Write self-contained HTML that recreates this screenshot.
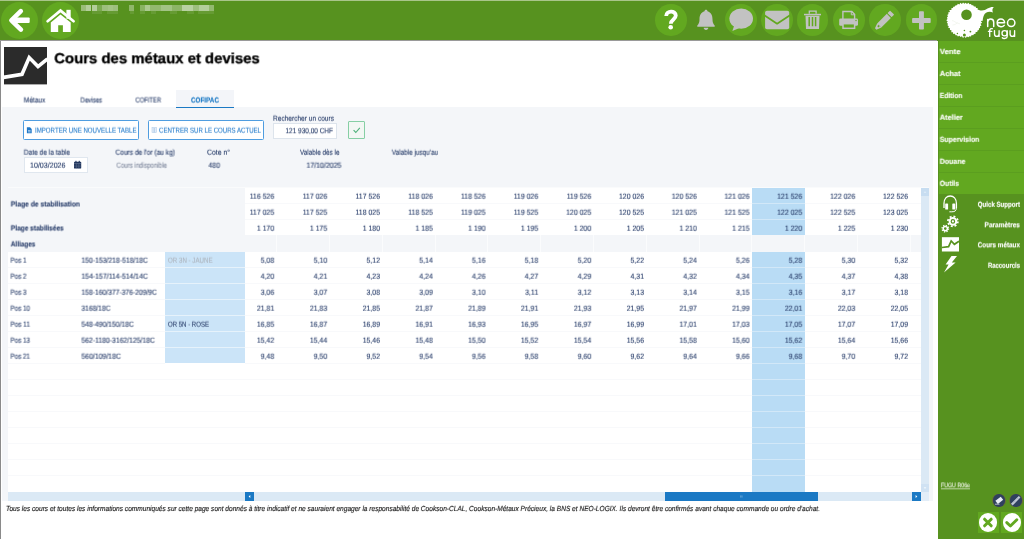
<!DOCTYPE html>
<html><head><meta charset="utf-8"><title>Cours des métaux et devises</title>
<style>
html,body{margin:0;padding:0;}
body{text-rendering:geometricPrecision;width:1024px;height:539px;overflow:hidden;background:#fff;font-family:"Liberation Sans",sans-serif;position:relative;}
div{box-sizing:border-box;}
svg{position:absolute;overflow:visible;}
.L{position:absolute;left:0;top:0;width:1024px;height:539px;will-change:transform;transform-origin:0 0;pointer-events:none;}
text{white-space:pre;}
</style></head><body>
<div style="position:absolute;left:0.00px;top:0.00px;width:1024.00px;height:41.00px;background:#57921f;"></div>
<div style="position:absolute;left:0.00px;top:0.00px;width:1024.00px;height:1.00px;background:#a9c58a;"></div>
<div style="position:absolute;left:0.00px;top:40.20px;width:937.30px;height:1.30px;background:#9a9a9a;"></div>
<div style="position:absolute;left:0.00px;top:41.00px;width:1.30px;height:498.00px;background:#8a8a8a;"></div>
<div style="position:absolute;left:937.50px;top:40.40px;width:86.50px;height:498.60px;background:#57921f;"></div>
<div style="position:absolute;left:1.15px;top:2.00px;width:37.00px;height:37.00px;border-radius:50%;background:#62a820"></div>
<div style="position:absolute;left:42.00px;top:2.00px;width:37.00px;height:37.00px;border-radius:50%;background:#62a820"></div>
<svg style="left:0;top:0" width="130" height="41"><path d="M20.8 11.2 L11.4 20.3 L20.9 29.600" fill="none" stroke="#fff" stroke-width="4.6" stroke-linecap="round" stroke-linejoin="round"/><rect x="11.500" y="17.600" width="18.200" height="5.400" rx="1" fill="#fff"/><path d="M47.600 21.200 L60.500 10.600 L73.600 21.200" fill="none" stroke="#fff" stroke-width="2.700" stroke-linecap="round" stroke-linejoin="miter"/><path d="M50.800 22.600 L60.500 14.500 L70.700 22.600 L70.700 31.900 L62.900 31.900 L62.900 25.200 L58.200 25.200 L58.200 31.900 L50.800 31.900 Z" fill="#fff"/><rect x="66.400" y="9.800" width="4.300" height="9" fill="#fff"/></svg>
<div style="position:absolute;left:0;top:0;width:300px;height:20px;filter:blur(0.45px)"><div style="position:absolute;left:80.70px;top:4.900px;width:5.40px;height:5.800px;background:rgba(255,255,255,0.4)"></div><div style="position:absolute;left:86.10px;top:4.900px;width:5.40px;height:5.800px;background:rgba(255,255,255,0.55)"></div><div style="position:absolute;left:91.50px;top:4.900px;width:5.40px;height:5.800px;background:rgba(255,255,255,0.55)"></div><div style="position:absolute;left:96.90px;top:4.900px;width:4.90px;height:5.800px;background:rgba(255,255,255,0.22)"></div><div style="position:absolute;left:101.80px;top:4.900px;width:5.80px;height:5.800px;background:rgba(255,255,255,0.42)"></div><div style="position:absolute;left:107.60px;top:4.900px;width:5.40px;height:5.800px;background:rgba(255,255,255,0.46)"></div><div style="position:absolute;left:113.00px;top:4.900px;width:5.40px;height:5.800px;background:rgba(255,255,255,0.42)"></div><div style="position:absolute;left:129.20px;top:4.900px;width:4.80px;height:5.800px;background:rgba(255,255,255,0.34)"></div><div style="position:absolute;left:140.00px;top:4.900px;width:5.20px;height:5.800px;background:rgba(255,255,255,0.3)"></div><div style="position:absolute;left:145.20px;top:4.900px;width:4.80px;height:5.800px;background:rgba(255,255,255,0.5)"></div><div style="position:absolute;left:150.00px;top:4.900px;width:10.80px;height:5.800px;background:rgba(255,255,255,0.36)"></div><div style="position:absolute;left:160.80px;top:4.900px;width:10.80px;height:5.800px;background:rgba(255,255,255,0.45)"></div><div style="position:absolute;left:171.60px;top:4.900px;width:10.70px;height:5.800px;background:rgba(255,255,255,0.32)"></div><div style="position:absolute;left:182.30px;top:4.900px;width:10.70px;height:5.800px;background:rgba(255,255,255,0.58)"></div><div style="position:absolute;left:193.00px;top:4.900px;width:5.90px;height:5.800px;background:rgba(255,255,255,0.42)"></div><div style="position:absolute;left:198.90px;top:4.900px;width:9.80px;height:5.800px;background:rgba(255,255,255,0.55)"></div><div style="position:absolute;left:208.70px;top:4.900px;width:5.30px;height:5.800px;background:rgba(255,255,255,0.36)"></div><div style="position:absolute;left:91.50px;top:11px;width:10.50px;height:3.400px;background:rgba(255,255,255,.09)"></div><div style="position:absolute;left:107.00px;top:11px;width:11.40px;height:3.400px;background:rgba(255,255,255,.09)"></div><div style="position:absolute;left:129.50px;top:11px;width:4.50px;height:3.400px;background:rgba(255,255,255,.09)"></div><div style="position:absolute;left:140.30px;top:11px;width:4.90px;height:3.400px;background:rgba(255,255,255,.09)"></div><div style="position:absolute;left:151.00px;top:11px;width:5.00px;height:3.400px;background:rgba(255,255,255,.09)"></div><div style="position:absolute;left:169.60px;top:11px;width:7.80px;height:3.400px;background:rgba(255,255,255,.09)"></div><div style="position:absolute;left:187.20px;top:11px;width:6.80px;height:3.400px;background:rgba(255,255,255,.09)"></div><div style="position:absolute;left:198.00px;top:11px;width:15.50px;height:3.400px;background:rgba(255,255,255,.09)"></div></div>
<div style="position:absolute;left:655.00px;top:4.10px;width:31.60px;height:31.60px;border-radius:50%;background:#62a820"></div>
<div style="position:absolute;left:725.30px;top:4.10px;width:31.60px;height:31.60px;border-radius:50%;background:#62a820"></div>
<div style="position:absolute;left:761.00px;top:4.10px;width:31.60px;height:31.60px;border-radius:50%;background:#62a820"></div>
<div style="position:absolute;left:796.90px;top:4.10px;width:31.60px;height:31.60px;border-radius:50%;background:#62a820"></div>
<div style="position:absolute;left:833.10px;top:4.10px;width:31.60px;height:31.60px;border-radius:50%;background:#62a820"></div>
<div style="position:absolute;left:869.00px;top:4.10px;width:31.60px;height:31.60px;border-radius:50%;background:#62a820"></div>
<div style="position:absolute;left:905.70px;top:4.10px;width:31.60px;height:31.60px;border-radius:50%;background:#62a820"></div>
<svg style="left:0;top:0" width="1024" height="41"><path d="M666.2 16 C666.2 10.400 675.800 10.200 675.800 15.600 C675.800 19.400 670.800 19.600 670.800 23.800" fill="none" stroke="#fff" stroke-width="3.800"/><circle cx="670.700" cy="27.300" r="2.300" fill="#fff"/></svg>
<svg style="left:0;top:0" width="1024" height="41"><path d="M706 9.700 c.9 0 1.500 .6 1.500 1.500 c3.600 1 5 4.200 5 8 c0 3 .6 4.600 2.200 6.200 l0 1.400 l-17.400 0 l0 -1.400 c1.600 -1.600 2.200 -3.200 2.200 -6.200 c0 -3.800 1.400 -7 5 -8 c0 -.9 .6 -1.500 1.500 -1.500 Z" fill="#c2c2c2"/><path d="M703.700 27.800 l4.600 0 c0 1.300 -1 2.200 -2.300 2.200 c-1.300 0 -2.300 -.9 -2.300 -2.200 Z" fill="#c2c2c2"/><ellipse cx="741.2" cy="18.600" rx="11.800" ry="10.200" fill="#c2c2c2"/><path d="M734.200 25.500 L732.400 30.900 L739.500 28 Z" fill="#c2c2c2"/><rect x="765.100" y="10.800" width="24.100" height="18.400" rx="1.800" fill="#c2c2c2"/><path d="M764.300 15.200 L777.100 23.700 L790 15.200" fill="none" stroke="#62a820" stroke-width="1.700" stroke-linejoin="round"/><rect x="804" y="13.800" width="17" height="1.500" fill="#c2c2c2"/><path d="M805.500 15.800 L819.500 15.800 L819 29 L806 29 Z" fill="#c2c2c2"/><path d="M809.300 13.800 L809.300 11.100 L816.100 11.100 L816.100 13.800" fill="none" stroke="#c2c2c2" stroke-width="1.300"/><path d="M809.200 17 L809.200 26.200 M812.500 17 L812.500 26.200 M815.600 17 L815.600 26.200" stroke="#62a820" stroke-width="1.500" fill="none"/><path d="M842.900 19 L842.900 11.500 L851.800 11.500 L854.600 14.400 L854.600 19" fill="none" stroke="#c2c2c2" stroke-width="1.400"/><path d="M851.300 11.500 L851.300 14.800 L854.600 14.800" fill="none" stroke="#c2c2c2" stroke-width="1"/><rect x="839.200" y="18.500" width="18.800" height="7.300" rx="1.400" fill="#c2c2c2"/><rect x="843" y="23.700" width="11.600" height="4.600" fill="#62a820" stroke="#c2c2c2" stroke-width="1.500"/><circle cx="856" cy="20.500" r=".7" fill="#62a820"/><g transform="translate(883.9,20.800) rotate(45)"><rect x="-2.900" y="-11.600" width="5.800" height="3.600" rx=".5" fill="#c2c2c2"/><rect x="-2.900" y="-7" width="5.800" height="13.600" fill="#c2c2c2"/><path d="M-2.900 6.500 L2.900 6.500 L1 11.600 L-1 11.600 Z" fill="#c2c2c2"/><circle cx="0" cy="7.600" r="1" fill="#62a820"/></g><rect x="912.100" y="18.100" width="18.600" height="4.900" rx=".8" fill="#c2c2c2"/><rect x="919" y="11.300" width="4.900" height="18.300" rx=".8" fill="#c2c2c2"/></svg>
<svg style="left:0;top:0" width="1024" height="41"><path d="M982.16 20.20 L980.94 21.42 L982.22 22.83 L980.53 23.81 L981.53 25.38 L979.96 26.19 L980.21 27.66 L978.95 28.43 L978.88 29.88 L977.50 30.44 L977.27 31.90 L975.66 32.09 L975.52 33.87 L973.97 33.96 L973.20 35.14 L971.62 34.89 L970.98 36.62 L969.43 36.18 L968.40 37.36 L966.89 36.42 L965.77 38.07 L964.40 36.40 L963.04 37.97 L961.91 36.36 L960.48 37.03 L959.52 35.72 L957.92 36.39 L957.03 35.20 L955.58 35.18 L954.91 33.84 L953.17 34.00 L953.03 32.21 L951.25 32.16 L951.47 30.30 L949.90 29.89 L950.00 28.35 L948.14 27.87 L948.80 26.20 L947.44 25.33 L947.97 23.87 L946.74 22.81 L947.77 21.42 L946.26 20.20 L947.53 18.96 L946.90 17.62 L947.98 16.53 L947.28 15.02 L948.55 14.10 L948.11 12.51 L949.96 12.03 L949.29 10.11 L951.44 10.07 L951.33 8.31 L952.87 8.02 L953.41 6.70 L954.94 6.60 L955.63 5.32 L957.07 5.28 L957.78 3.68 L959.44 4.43 L960.35 2.81 L961.91 4.03 L963.05 2.55 L964.40 3.68 L965.74 2.64 L966.90 3.95 L968.44 2.84 L969.43 4.22 L970.93 3.89 L971.73 5.28 L973.17 5.31 L973.93 6.50 L975.63 6.39 L976.03 7.92 L977.71 8.10 L977.43 10.01 L979.11 10.37 L979.04 11.92 L980.18 12.75 L980.02 14.19 L981.25 15.11 L980.55 16.59 L981.75 17.64 L981.31 18.96 Z" fill="#fff"/><path d="M976 8.500 C980 11.500 984.500 11 987.500 8.600 C989.500 7.200 991.800 6.800 993.800 7 C992.300 8.600 992 10.400 993 12.400 C990.500 11.400 988 11.600 986 12.800 C983.800 14.200 983 17 982.600 21 L975 18 Z" fill="#fff"/><circle cx="966.500" cy="14.800" r="5.300" fill="#57921f"/><circle cx="964.400" cy="34.900" r="1.500" fill="#57921f"/><circle cx="964.400" cy="30.500" r=".8" fill="#57921f"/><circle cx="970.400" cy="31.600" r=".9" fill="#57921f"/><circle cx="957.400" cy="33.500" r=".7" fill="#57921f"/><path d="M952 20.500 C954.500 20.800 956 23.500 960 23.800 M952.500 25 C955 25 956.500 23.500 957.500 22.500" fill="none" stroke="#dfe8d6" stroke-width=".35"/><g fill="none" stroke="#fff" stroke-width="1.500" stroke-linecap="round" stroke-linejoin="round"><path d="M987.700 26.600 L987.700 19.400 M987.700 22.300 C987.700 17.900 993.700 17.900 993.700 22.300 L993.700 26.600"/><path d="M997.400 22.700 L1004.600 22.700 C1004.600 17.800 997.200 17.800 997.200 22.800 C997.200 27.200 1002.400 27.600 1004.200 25.400"/><circle cx="1011.200" cy="22.800" r="3.700"/></g><g fill="none" stroke="#fff" stroke-width="1.350" stroke-linecap="round" stroke-linejoin="round"><path d="M989.700 36.400 L989.700 30.600 C989.700 28.700 991 28.400 992.300 28.700 M988.400 31.300 L991.800 31.300"/><path d="M994.500 30.700 L994.500 33.900 C994.500 37.100 999.100 37.100 999.100 33.900 L999.100 30.700 L999.100 36.400"/><circle cx="1004.600" cy="33.300" r="2.600"/><path d="M1007.200 30.700 L1007.200 36.200 C1007.200 38.800 1003.400 39 1002.300 37.700"/><path d="M1010.100 30.700 L1010.100 33.900 C1010.100 37.100 1014.600 37.100 1014.600 33.900 L1014.600 30.700 L1014.600 36.400"/></g></svg>
<div style="position:absolute;left:938.80px;top:40.50px;width:85.20px;height:21.93px;background:#62a820;"></div>
<div style="position:absolute;left:938.80px;top:62.43px;width:85.20px;height:21.93px;background:#62a820;"></div>
<div style="position:absolute;left:938.80px;top:61.93px;width:85.20px;height:1.00px;background:#5b9e1f;"></div>
<div style="position:absolute;left:938.80px;top:84.36px;width:85.20px;height:21.93px;background:#62a820;"></div>
<div style="position:absolute;left:938.80px;top:83.86px;width:85.20px;height:1.00px;background:#5b9e1f;"></div>
<div style="position:absolute;left:938.80px;top:106.29px;width:85.20px;height:21.93px;background:#62a820;"></div>
<div style="position:absolute;left:938.80px;top:105.79px;width:85.20px;height:1.00px;background:#5b9e1f;"></div>
<div style="position:absolute;left:938.80px;top:128.22px;width:85.20px;height:21.93px;background:#62a820;"></div>
<div style="position:absolute;left:938.80px;top:127.72px;width:85.20px;height:1.00px;background:#5b9e1f;"></div>
<div style="position:absolute;left:938.80px;top:150.15px;width:85.20px;height:21.93px;background:#62a820;"></div>
<div style="position:absolute;left:938.80px;top:149.65px;width:85.20px;height:1.00px;background:#5b9e1f;"></div>
<div style="position:absolute;left:938.80px;top:172.08px;width:85.20px;height:21.93px;background:#62a820;"></div>
<div style="position:absolute;left:938.80px;top:171.58px;width:85.20px;height:1.00px;background:#5b9e1f;"></div>
<svg style="left:0;top:0" width="1024" height="539"><path d="M944 208 L944 203.600 C944 198.600 946.800 196 950.200 196 C953.600 196 956.400 198.600 956.400 203.600 L956.400 208" fill="none" stroke="#fff" stroke-width="1.300"/><rect x="945.200" y="203.400" width="2.900" height="6.200" rx=".7" fill="#fff"/><rect x="952.300" y="203.400" width="2.900" height="6.200" rx=".7" fill="#fff"/><path d="M956.400 207.500 C956.400 210.800 955 211.800 951.800 211.800 L949.400 211.800" fill="none" stroke="#fff" stroke-width="1"/><circle cx="952.900" cy="221.400" r="3.300" fill="none" stroke="#fff" stroke-width="2"/><circle cx="952.900" cy="221.400" r="5" fill="none" stroke="#fff" stroke-width="1.700" stroke-dasharray="1.960 1.960"/><circle cx="952.900" cy="221.400" r="1.100" fill="#fff"/><circle cx="945.300" cy="228.600" r="2.100" fill="none" stroke="#fff" stroke-width="1.500"/><circle cx="945.300" cy="228.600" r="3.300" fill="none" stroke="#fff" stroke-width="1.200" stroke-dasharray="1.300 1.290"/><rect x="941.900" y="237.200" width="17.100" height="14.300" fill="#fff"/><path d="M941.900 247.500 L948.600 246.700 L951.200 241 L954.400 244.300 L959 241.300" fill="none" stroke="#57921f" stroke-width="1.700"/><path d="M951.500 256 L957 256 L951.800 262.600 L955.600 262.600 L944 272.500 L948.600 264.600 L945.600 264.600 Z" fill="#fff"/></svg>
<div style="position:absolute;left:992.30px;top:493.90px;width:13.60px;height:13.60px;border-radius:50%;background:#6b6a3a"></div>
<div style="position:absolute;left:992.80px;top:494.40px;width:12.60px;height:12.60px;border-radius:50%;background:#2f405e"></div>
<div style="position:absolute;left:1009.00px;top:493.90px;width:13.60px;height:13.60px;border-radius:50%;background:#6b6a3a"></div>
<div style="position:absolute;left:1009.50px;top:494.40px;width:12.60px;height:12.60px;border-radius:50%;background:#2f405e"></div>
<svg style="left:0;top:0" width="1024" height="539"><g transform="translate(999.3,500.3) rotate(-38)"><rect x="-3.400" y="-2" width="6.800" height="4" fill="#e8edf5"/></g><path d="M995 504.200 L999.500 504.200" stroke="#cfd6e2" stroke-width=".8"/><path d="M1011.800 504.600 L1019.600 496.800" stroke="#c9d0dc" stroke-width="2.200"/><path d="M1011.800 504.600 L1019.600 496.800" stroke="#5b6a86" stroke-width=".6" stroke-dasharray="1 1"/></svg>
<div style="position:absolute;left:977.60px;top:511.60px;width:21.50px;height:21.40px;background:#62a820;"></div>
<div style="position:absolute;left:1001.00px;top:511.60px;width:21.30px;height:21.40px;background:#62a820;"></div>
<div style="position:absolute;left:978.70px;top:513.30px;width:18.40px;height:18.40px;border-radius:50%;background:#fff"></div>
<div style="position:absolute;left:1002.70px;top:513.30px;width:18.40px;height:18.40px;border-radius:50%;background:#fff"></div>
<svg style="left:0;top:0" width="1024" height="539"><path d="M984.600 519.200 L991.200 525.800 M991.200 519.200 L984.600 525.800" stroke="#62a820" stroke-width="3" stroke-linecap="round" fill="none"/><path d="M1006.800 522.600 L1010.400 526 L1016.800 519.800" stroke="#62a820" stroke-width="2.900" stroke-linecap="round" stroke-linejoin="round" fill="none"/></svg>
<svg style="left:4px;top:47.3px" width="43" height="37.4" viewBox="0 0 43 37.4"><rect width="43" height="37.400" fill="#2b2b2b"/><path d="M-0.500 30.400 L18 27.300 L25.200 10.600 L34 19.600 L43.500 11.800" fill="none" stroke="#fff" stroke-width="3.600" stroke-linejoin="miter"/></svg>
<div style="position:absolute;left:175.80px;top:89.80px;width:58.00px;height:17.80px;background:#f3f5f9;"></div>
<div style="position:absolute;left:2.00px;top:107.40px;width:931.10px;height:394.00px;background:#f4f6f9;"></div>
<div style="position:absolute;left:175.80px;top:106.60px;width:58.00px;height:1.50px;background:#1b79c4;"></div>
<div style="position:absolute;left:23.00px;top:120.00px;width:116.00px;height:20.00px;background:#fff;border:1px solid #4f9de0;border-radius:1.500px;"></div>
<div style="position:absolute;left:148.00px;top:120.00px;width:115.60px;height:20.00px;background:#fff;border:1px solid #4f9de0;border-radius:1.500px;"></div>
<svg style="left:0;top:0" width="400" height="180"><path d="M26.900 127.300 L30 127.300 L31.700 129 L31.700 133.300 L26.900 133.300 Z" fill="#1f78c8"/><path d="M28 130.600 L30.600 130.600 M28 131.900 L30.600 131.900" stroke="#fff" stroke-width=".6"/><rect x="152" y="127.600" width="4.400" height="4.900" fill="#e3edf8" stroke="#b3cde9" stroke-width=".6"/><path d="M154.200 128 L154.200 132.300" stroke="#9dbfe3" stroke-width=".8"/></svg>
<div style="position:absolute;left:273.00px;top:123.00px;width:64.00px;height:15.60px;background:#fff;border:1px solid #dde4ec;"></div>
<div style="position:absolute;left:347.70px;top:121.40px;width:17.80px;height:17.50px;background:#f2f7f4;border:1px solid #86cfa5;border-radius:1px;"></div>
<svg style="left:0;top:0" width="400" height="180"><path d="M353.600 130.200 L355.800 132.500 L359.800 127.900" fill="none" stroke="#4db07a" stroke-width="1.100"/></svg>
<div style="position:absolute;left:23.50px;top:157.00px;width:64.00px;height:15.60px;background:#fff;border:1px solid #e0e7ef;"></div>
<svg style="left:0;top:0" width="400" height="180"><rect x="74" y="161.800" width="7.200" height="6.800" rx=".7" fill="#22365e"/><rect x="75.400" y="160.800" width="1.100" height="2" fill="#22365e"/><rect x="78.700" y="160.800" width="1.100" height="2" fill="#22365e"/><path d="M74 163.600 L81.200 163.600" stroke="#8090aa" stroke-width=".5"/><path d="M76.400 164 L76.400 168.600 M78.800 164 L78.800 168.600 M74 166.100 L81.200 166.100" stroke="#6d7d99" stroke-width=".4"/></svg>
<div style="position:absolute;left:7.70px;top:186.90px;width:921.50px;height:1.00px;background:#fafbfc;"></div>
<div style="position:absolute;left:7.70px;top:188.00px;width:913.10px;height:303.80px;background:#fff;"></div>
<div style="position:absolute;left:7.70px;top:203.00px;width:913.10px;height:1.00px;background:#f8f9fb;"></div>
<div style="position:absolute;left:7.70px;top:219.00px;width:913.10px;height:1.00px;background:#f8f9fb;"></div>
<div style="position:absolute;left:7.70px;top:235.00px;width:913.10px;height:1.00px;background:#f8f9fb;"></div>
<div style="position:absolute;left:7.70px;top:251.00px;width:913.10px;height:1.00px;background:#f8f9fb;"></div>
<div style="position:absolute;left:7.70px;top:267.00px;width:913.10px;height:1.00px;background:#f8f9fb;"></div>
<div style="position:absolute;left:7.70px;top:283.00px;width:913.10px;height:1.00px;background:#f8f9fb;"></div>
<div style="position:absolute;left:7.70px;top:299.00px;width:913.10px;height:1.00px;background:#f8f9fb;"></div>
<div style="position:absolute;left:7.70px;top:315.00px;width:913.10px;height:1.00px;background:#f8f9fb;"></div>
<div style="position:absolute;left:7.70px;top:331.00px;width:913.10px;height:1.00px;background:#f8f9fb;"></div>
<div style="position:absolute;left:7.70px;top:347.00px;width:913.10px;height:1.00px;background:#f8f9fb;"></div>
<div style="position:absolute;left:7.70px;top:363.00px;width:913.10px;height:1.00px;background:#f8f9fb;"></div>
<div style="position:absolute;left:7.70px;top:379.00px;width:913.10px;height:1.00px;background:#f8f9fb;"></div>
<div style="position:absolute;left:7.70px;top:395.00px;width:913.10px;height:1.00px;background:#f8f9fb;"></div>
<div style="position:absolute;left:7.70px;top:411.00px;width:913.10px;height:1.00px;background:#f8f9fb;"></div>
<div style="position:absolute;left:7.70px;top:427.00px;width:913.10px;height:1.00px;background:#f8f9fb;"></div>
<div style="position:absolute;left:7.70px;top:443.00px;width:913.10px;height:1.00px;background:#f8f9fb;"></div>
<div style="position:absolute;left:7.70px;top:459.00px;width:913.10px;height:1.00px;background:#f8f9fb;"></div>
<div style="position:absolute;left:7.70px;top:475.00px;width:913.10px;height:1.00px;background:#f8f9fb;"></div>
<div style="position:absolute;left:7.70px;top:188.00px;width:237.30px;height:64.00px;background:#f4f6f9;"></div>
<div style="position:absolute;left:752.20px;top:188.00px;width:52.60px;height:303.80px;background:#b9dcf5;"></div>
<div style="position:absolute;left:752.20px;top:203.00px;width:52.60px;height:1.00px;background:#d2e8f8;"></div>
<div style="position:absolute;left:752.20px;top:219.00px;width:52.60px;height:1.00px;background:#d2e8f8;"></div>
<div style="position:absolute;left:752.20px;top:235.00px;width:52.60px;height:1.00px;background:#d2e8f8;"></div>
<div style="position:absolute;left:752.20px;top:251.00px;width:52.60px;height:1.00px;background:#d2e8f8;"></div>
<div style="position:absolute;left:752.20px;top:267.00px;width:52.60px;height:1.00px;background:#d2e8f8;"></div>
<div style="position:absolute;left:752.20px;top:283.00px;width:52.60px;height:1.00px;background:#d2e8f8;"></div>
<div style="position:absolute;left:752.20px;top:299.00px;width:52.60px;height:1.00px;background:#d2e8f8;"></div>
<div style="position:absolute;left:752.20px;top:315.00px;width:52.60px;height:1.00px;background:#d2e8f8;"></div>
<div style="position:absolute;left:752.20px;top:331.00px;width:52.60px;height:1.00px;background:#d2e8f8;"></div>
<div style="position:absolute;left:752.20px;top:347.00px;width:52.60px;height:1.00px;background:#d2e8f8;"></div>
<div style="position:absolute;left:752.20px;top:363.00px;width:52.60px;height:1.00px;background:#d2e8f8;"></div>
<div style="position:absolute;left:752.20px;top:379.00px;width:52.60px;height:1.00px;background:#d2e8f8;"></div>
<div style="position:absolute;left:752.20px;top:395.00px;width:52.60px;height:1.00px;background:#d2e8f8;"></div>
<div style="position:absolute;left:752.20px;top:411.00px;width:52.60px;height:1.00px;background:#d2e8f8;"></div>
<div style="position:absolute;left:752.20px;top:427.00px;width:52.60px;height:1.00px;background:#d2e8f8;"></div>
<div style="position:absolute;left:752.20px;top:443.00px;width:52.60px;height:1.00px;background:#d2e8f8;"></div>
<div style="position:absolute;left:752.20px;top:459.00px;width:52.60px;height:1.00px;background:#d2e8f8;"></div>
<div style="position:absolute;left:752.20px;top:475.00px;width:52.60px;height:1.00px;background:#d2e8f8;"></div>
<div style="position:absolute;left:245.00px;top:235.30px;width:675.80px;height:16.40px;background:#f4f6f9;"></div>
<div style="position:absolute;left:276.15px;top:235.30px;width:0.90px;height:16.40px;background:#fbfcfd;"></div>
<div style="position:absolute;left:328.95px;top:235.30px;width:0.90px;height:16.40px;background:#fbfcfd;"></div>
<div style="position:absolute;left:381.75px;top:235.30px;width:0.90px;height:16.40px;background:#fbfcfd;"></div>
<div style="position:absolute;left:434.55px;top:235.30px;width:0.90px;height:16.40px;background:#fbfcfd;"></div>
<div style="position:absolute;left:487.35px;top:235.30px;width:0.90px;height:16.40px;background:#fbfcfd;"></div>
<div style="position:absolute;left:540.15px;top:235.30px;width:0.90px;height:16.40px;background:#fbfcfd;"></div>
<div style="position:absolute;left:592.95px;top:235.30px;width:0.90px;height:16.40px;background:#fbfcfd;"></div>
<div style="position:absolute;left:645.75px;top:235.30px;width:0.90px;height:16.40px;background:#fbfcfd;"></div>
<div style="position:absolute;left:698.55px;top:235.30px;width:0.90px;height:16.40px;background:#fbfcfd;"></div>
<div style="position:absolute;left:751.35px;top:235.30px;width:0.90px;height:16.40px;background:#fbfcfd;"></div>
<div style="position:absolute;left:804.15px;top:235.30px;width:0.90px;height:16.40px;background:#fbfcfd;"></div>
<div style="position:absolute;left:856.95px;top:235.30px;width:0.90px;height:16.40px;background:#fbfcfd;"></div>
<div style="position:absolute;left:909.75px;top:235.30px;width:0.90px;height:16.40px;background:#fbfcfd;"></div>
<div style="position:absolute;left:165.20px;top:252.00px;width:79.80px;height:112.00px;background:#cbe4f8;"></div>
<div style="position:absolute;left:165.20px;top:267.00px;width:79.80px;height:1.00px;background:#e6f2fb;"></div>
<div style="position:absolute;left:165.20px;top:283.00px;width:79.80px;height:1.00px;background:#e6f2fb;"></div>
<div style="position:absolute;left:165.20px;top:299.00px;width:79.80px;height:1.00px;background:#e6f2fb;"></div>
<div style="position:absolute;left:165.20px;top:315.00px;width:79.80px;height:1.00px;background:#e6f2fb;"></div>
<div style="position:absolute;left:165.20px;top:331.00px;width:79.80px;height:1.00px;background:#e6f2fb;"></div>
<div style="position:absolute;left:165.20px;top:347.00px;width:79.80px;height:1.00px;background:#e6f2fb;"></div>
<div style="position:absolute;left:165.20px;top:363.00px;width:79.80px;height:1.00px;background:#fff;"></div>
<div style="position:absolute;left:920.60px;top:188.00px;width:8.60px;height:303.80px;background:#dbe9f5;"></div>
<div style="position:absolute;left:920.60px;top:188.00px;width:8.60px;height:8.00px;background:#c7ddf1;"></div>
<div style="position:absolute;left:920.60px;top:484.10px;width:8.60px;height:7.70px;background:#d0e2f3;"></div>
<div style="position:absolute;left:7.70px;top:491.50px;width:921.50px;height:9.40px;background:#dbe9f5;"></div>
<div style="position:absolute;left:920.60px;top:491.80px;width:8.60px;height:9.10px;background:#e2edf8;"></div>
<div style="position:absolute;left:245.00px;top:491.90px;width:9.00px;height:9.00px;background:#1b79c4;"></div>
<div style="position:absolute;left:911.90px;top:491.90px;width:8.80px;height:9.00px;background:#1b79c4;"></div>
<div style="position:absolute;left:665.00px;top:491.90px;width:153.00px;height:9.00px;background:#1b79c4;"></div>
<svg style="left:0;top:0" width="1024" height="539"><path d="M923.700 487.300 L926.300 487.300 L925 488.900 Z" fill="#f4f9fd"/><path d="M923.700 192.800 L926.300 192.800 L925 191.200 Z" fill="#e3effa"/><path d="M250.300 494.900 L250.300 498.100 L248.600 496.500 Z M915.600 494.900 L915.600 498.100 L917.300 496.500 Z" fill="#fff"/><path d="M740.700 495.400 L740.700 497.600 M742 495.400 L742 497.600" stroke="#9fc8ea" stroke-width=".5"/></svg>
<svg class="L" width="1024" height="539" style="transform:translate3d(0.0px,0.0px,0) rotate(0.005deg)"><text x="6" y="511" font-size="7.4" fill="#111" stroke="#111" stroke-width="0.12" font-style="italic" textLength="814.00" lengthAdjust="spacingAndGlyphs">Tous les cours et toutes les informations communiqués sur cette page sont donnés à titre indicatif et ne sauraient engager la responsabilité de Cookson-CLAL, Cookson-Métaux Précieux, la BNS et NEO-LOGIX. Ils devront être confirmés avant chaque commande ou ordre d'achat.</text></svg>
<svg class="L" width="1024" height="539" style="transform:translate3d(0.0px,0.25px,0) rotate(0.005deg)"><text x="1020" y="227" font-size="7.4" fill="#fff" stroke="#fff" stroke-width="0.12" font-weight="bold" text-anchor="end" textLength="35.40" lengthAdjust="spacingAndGlyphs">Paramètres</text><text x="1020" y="247" font-size="7.4" fill="#fff" stroke="#fff" stroke-width="0.12" font-weight="bold" text-anchor="end" textLength="42.20" lengthAdjust="spacingAndGlyphs">Cours métaux</text><text x="941" y="487" font-size="6.4" fill="#e9f1df" stroke="#e9f1df" stroke-width="0.12" textLength="29.00" lengthAdjust="spacingAndGlyphs" text-decoration="underline">FUGU R06e</text><text x="333" y="133" font-size="7.6" fill="#283d6a" stroke="#283d6a" stroke-width="0.12" text-anchor="end" textLength="47.50" lengthAdjust="spacingAndGlyphs">121 930,00 CHF</text></svg>
<svg class="L" width="1024" height="539" style="transform:translate3d(0.0px,0.5px,0) rotate(0.005deg)"><text x="191" y="102" font-size="7.4" fill="#1b79c4" stroke="#1b79c4" stroke-width="0.12" font-weight="bold" textLength="28.00" lengthAdjust="spacingAndGlyphs">COFIPAC</text></svg>
<svg class="L" width="1024" height="539" style="transform:translate3d(0.0px,0.75px,0) rotate(0.005deg)"><text x="1020" y="206" font-size="7.4" fill="#fff" stroke="#fff" stroke-width="0.12" font-weight="bold" text-anchor="end" textLength="42.20" lengthAdjust="spacingAndGlyphs">Quick Support</text><text x="1020" y="267" font-size="7.4" fill="#fff" stroke="#fff" stroke-width="0.12" font-weight="bold" text-anchor="end" textLength="32.10" lengthAdjust="spacingAndGlyphs">Raccourcis</text><text x="35" y="132" font-size="7.6" fill="#2a7fcc" stroke="#2a7fcc" stroke-width="0.12" textLength="101.50" lengthAdjust="spacingAndGlyphs">IMPORTER UNE NOUVELLE TABLE</text><text x="159" y="132" font-size="7.6" fill="#2a7fcc" stroke="#2a7fcc" stroke-width="0.12" textLength="102.00" lengthAdjust="spacingAndGlyphs">CENTRER SUR LE COURS ACTUEL</text><text x="273" y="120" font-size="7.6" fill="#283d6a" stroke="#283d6a" stroke-width="0.12" textLength="61.00" lengthAdjust="spacingAndGlyphs">Rechercher un cours</text><text x="30" y="167" font-size="7.6" fill="#283d6a" stroke="#283d6a" stroke-width="0.12" textLength="35.50" lengthAdjust="spacingAndGlyphs">10/03/2026</text><text x="207" y="154" font-size="7.6" fill="#283d6a" stroke="#283d6a" stroke-width="0.12" textLength="23.00" lengthAdjust="spacingAndGlyphs">Cote n°</text><text x="300" y="154" font-size="7.6" fill="#283d6a" stroke="#283d6a" stroke-width="0.12" textLength="39.50" lengthAdjust="spacingAndGlyphs">Valable dès le</text><text x="168" y="262" font-size="7.6" fill="#adb5bf" stroke="#adb5bf" stroke-width="0.12" textLength="44.50" lengthAdjust="spacingAndGlyphs">OR 3N - JAUNE</text><text x="168" y="326" font-size="7.6" fill="#283d6a" stroke="#283d6a" stroke-width="0.12" textLength="41.00" lengthAdjust="spacingAndGlyphs">OR 5N - ROSE</text><text x="380" y="198" font-size="7.6" fill="#283d6a" stroke="#283d6a" stroke-width="0.12" text-anchor="end" textLength="24.53" lengthAdjust="spacingAndGlyphs">117 526</text><text x="380" y="214" font-size="7.6" fill="#283d6a" stroke="#283d6a" stroke-width="0.12" text-anchor="end" textLength="24.53" lengthAdjust="spacingAndGlyphs">118 025</text><text x="380" y="230" font-size="7.6" fill="#283d6a" stroke="#283d6a" stroke-width="0.12" text-anchor="end" textLength="17.34" lengthAdjust="spacingAndGlyphs">1 180</text><text x="380" y="262" font-size="7.6" fill="#283d6a" stroke="#283d6a" stroke-width="0.12" text-anchor="end" textLength="13.49" lengthAdjust="spacingAndGlyphs">5,12</text><text x="380" y="278" font-size="7.6" fill="#283d6a" stroke="#283d6a" stroke-width="0.12" text-anchor="end" textLength="13.49" lengthAdjust="spacingAndGlyphs">4,23</text><text x="380" y="294" font-size="7.6" fill="#283d6a" stroke="#283d6a" stroke-width="0.12" text-anchor="end" textLength="13.49" lengthAdjust="spacingAndGlyphs">3,08</text><text x="380" y="310" font-size="7.6" fill="#283d6a" stroke="#283d6a" stroke-width="0.12" text-anchor="end" textLength="17.34" lengthAdjust="spacingAndGlyphs">21,85</text><text x="380" y="326" font-size="7.6" fill="#283d6a" stroke="#283d6a" stroke-width="0.12" text-anchor="end" textLength="17.34" lengthAdjust="spacingAndGlyphs">16,89</text><text x="380" y="342" font-size="7.6" fill="#283d6a" stroke="#283d6a" stroke-width="0.12" text-anchor="end" textLength="17.34" lengthAdjust="spacingAndGlyphs">15,46</text><text x="380" y="358" font-size="7.6" fill="#283d6a" stroke="#283d6a" stroke-width="0.12" text-anchor="end" textLength="13.49" lengthAdjust="spacingAndGlyphs">9,52</text><text x="644" y="198" font-size="7.6" fill="#283d6a" stroke="#283d6a" stroke-width="0.12" text-anchor="end" textLength="25.05" lengthAdjust="spacingAndGlyphs">120 026</text><text x="644" y="214" font-size="7.6" fill="#283d6a" stroke="#283d6a" stroke-width="0.12" text-anchor="end" textLength="25.05" lengthAdjust="spacingAndGlyphs">120 525</text><text x="644" y="230" font-size="7.6" fill="#283d6a" stroke="#283d6a" stroke-width="0.12" text-anchor="end" textLength="17.34" lengthAdjust="spacingAndGlyphs">1 205</text><text x="644" y="262" font-size="7.6" fill="#283d6a" stroke="#283d6a" stroke-width="0.12" text-anchor="end" textLength="13.49" lengthAdjust="spacingAndGlyphs">5,22</text><text x="644" y="278" font-size="7.6" fill="#283d6a" stroke="#283d6a" stroke-width="0.12" text-anchor="end" textLength="13.49" lengthAdjust="spacingAndGlyphs">4,31</text><text x="644" y="294" font-size="7.6" fill="#283d6a" stroke="#283d6a" stroke-width="0.12" text-anchor="end" textLength="13.49" lengthAdjust="spacingAndGlyphs">3,13</text><text x="644" y="310" font-size="7.6" fill="#283d6a" stroke="#283d6a" stroke-width="0.12" text-anchor="end" textLength="17.34" lengthAdjust="spacingAndGlyphs">21,95</text><text x="644" y="326" font-size="7.6" fill="#283d6a" stroke="#283d6a" stroke-width="0.12" text-anchor="end" textLength="17.34" lengthAdjust="spacingAndGlyphs">16,99</text><text x="644" y="342" font-size="7.6" fill="#283d6a" stroke="#283d6a" stroke-width="0.12" text-anchor="end" textLength="17.34" lengthAdjust="spacingAndGlyphs">15,56</text><text x="644" y="358" font-size="7.6" fill="#283d6a" stroke="#283d6a" stroke-width="0.12" text-anchor="end" textLength="13.49" lengthAdjust="spacingAndGlyphs">9,62</text><text x="908" y="198" font-size="7.6" fill="#283d6a" stroke="#283d6a" stroke-width="0.12" text-anchor="end" textLength="25.05" lengthAdjust="spacingAndGlyphs">122 526</text><text x="908" y="214" font-size="7.6" fill="#283d6a" stroke="#283d6a" stroke-width="0.12" text-anchor="end" textLength="25.05" lengthAdjust="spacingAndGlyphs">123 025</text><text x="908" y="230" font-size="7.6" fill="#283d6a" stroke="#283d6a" stroke-width="0.12" text-anchor="end" textLength="17.34" lengthAdjust="spacingAndGlyphs">1 230</text><text x="908" y="262" font-size="7.6" fill="#283d6a" stroke="#283d6a" stroke-width="0.12" text-anchor="end" textLength="13.49" lengthAdjust="spacingAndGlyphs">5,32</text><text x="908" y="278" font-size="7.6" fill="#283d6a" stroke="#283d6a" stroke-width="0.12" text-anchor="end" textLength="13.49" lengthAdjust="spacingAndGlyphs">4,38</text><text x="908" y="294" font-size="7.6" fill="#283d6a" stroke="#283d6a" stroke-width="0.12" text-anchor="end" textLength="13.49" lengthAdjust="spacingAndGlyphs">3,18</text><text x="908" y="310" font-size="7.6" fill="#283d6a" stroke="#283d6a" stroke-width="0.12" text-anchor="end" textLength="17.34" lengthAdjust="spacingAndGlyphs">22,05</text><text x="908" y="326" font-size="7.6" fill="#283d6a" stroke="#283d6a" stroke-width="0.12" text-anchor="end" textLength="17.34" lengthAdjust="spacingAndGlyphs">17,09</text><text x="908" y="342" font-size="7.6" fill="#283d6a" stroke="#283d6a" stroke-width="0.12" text-anchor="end" textLength="17.34" lengthAdjust="spacingAndGlyphs">15,66</text><text x="908" y="358" font-size="7.6" fill="#283d6a" stroke="#283d6a" stroke-width="0.12" text-anchor="end" textLength="13.49" lengthAdjust="spacingAndGlyphs">9,72</text></svg>
<svg class="L" width="1024" height="539" style="transform:translate3d(0.25px,0.25px,0) rotate(0.005deg)"><text x="54" y="63" font-size="14.6" fill="#000" stroke="#000" stroke-width="0.35" font-weight="bold" textLength="205.60" lengthAdjust="spacingAndGlyphs">Cours des métaux et devises</text></svg>
<svg class="L" width="1024" height="539" style="transform:translate3d(0.25px,0.75px,0) rotate(0.005deg)"><text x="274" y="198" font-size="7.6" fill="#283d6a" stroke="#283d6a" stroke-width="0.12" text-anchor="end" textLength="24.53" lengthAdjust="spacingAndGlyphs">116 526</text><text x="274" y="214" font-size="7.6" fill="#283d6a" stroke="#283d6a" stroke-width="0.12" text-anchor="end" textLength="24.53" lengthAdjust="spacingAndGlyphs">117 025</text><text x="274" y="230" font-size="7.6" fill="#283d6a" stroke="#283d6a" stroke-width="0.12" text-anchor="end" textLength="17.34" lengthAdjust="spacingAndGlyphs">1 170</text><text x="274" y="262" font-size="7.6" fill="#283d6a" stroke="#283d6a" stroke-width="0.12" text-anchor="end" textLength="13.49" lengthAdjust="spacingAndGlyphs">5,08</text><text x="274" y="278" font-size="7.6" fill="#283d6a" stroke="#283d6a" stroke-width="0.12" text-anchor="end" textLength="13.49" lengthAdjust="spacingAndGlyphs">4,20</text><text x="274" y="294" font-size="7.6" fill="#283d6a" stroke="#283d6a" stroke-width="0.12" text-anchor="end" textLength="13.49" lengthAdjust="spacingAndGlyphs">3,06</text><text x="274" y="310" font-size="7.6" fill="#283d6a" stroke="#283d6a" stroke-width="0.12" text-anchor="end" textLength="17.34" lengthAdjust="spacingAndGlyphs">21,81</text><text x="274" y="326" font-size="7.6" fill="#283d6a" stroke="#283d6a" stroke-width="0.12" text-anchor="end" textLength="17.34" lengthAdjust="spacingAndGlyphs">16,85</text><text x="274" y="342" font-size="7.6" fill="#283d6a" stroke="#283d6a" stroke-width="0.12" text-anchor="end" textLength="17.34" lengthAdjust="spacingAndGlyphs">15,42</text><text x="274" y="358" font-size="7.6" fill="#283d6a" stroke="#283d6a" stroke-width="0.12" text-anchor="end" textLength="13.49" lengthAdjust="spacingAndGlyphs">9,48</text><text x="327" y="198" font-size="7.6" fill="#283d6a" stroke="#283d6a" stroke-width="0.12" text-anchor="end" textLength="24.53" lengthAdjust="spacingAndGlyphs">117 026</text><text x="327" y="214" font-size="7.6" fill="#283d6a" stroke="#283d6a" stroke-width="0.12" text-anchor="end" textLength="24.53" lengthAdjust="spacingAndGlyphs">117 525</text><text x="327" y="230" font-size="7.6" fill="#283d6a" stroke="#283d6a" stroke-width="0.12" text-anchor="end" textLength="17.34" lengthAdjust="spacingAndGlyphs">1 175</text><text x="327" y="262" font-size="7.6" fill="#283d6a" stroke="#283d6a" stroke-width="0.12" text-anchor="end" textLength="13.49" lengthAdjust="spacingAndGlyphs">5,10</text><text x="327" y="278" font-size="7.6" fill="#283d6a" stroke="#283d6a" stroke-width="0.12" text-anchor="end" textLength="13.49" lengthAdjust="spacingAndGlyphs">4,21</text><text x="327" y="294" font-size="7.6" fill="#283d6a" stroke="#283d6a" stroke-width="0.12" text-anchor="end" textLength="13.49" lengthAdjust="spacingAndGlyphs">3,07</text><text x="327" y="310" font-size="7.6" fill="#283d6a" stroke="#283d6a" stroke-width="0.12" text-anchor="end" textLength="17.34" lengthAdjust="spacingAndGlyphs">21,83</text><text x="327" y="326" font-size="7.6" fill="#283d6a" stroke="#283d6a" stroke-width="0.12" text-anchor="end" textLength="17.34" lengthAdjust="spacingAndGlyphs">16,87</text><text x="327" y="342" font-size="7.6" fill="#283d6a" stroke="#283d6a" stroke-width="0.12" text-anchor="end" textLength="17.34" lengthAdjust="spacingAndGlyphs">15,44</text><text x="327" y="358" font-size="7.6" fill="#283d6a" stroke="#283d6a" stroke-width="0.12" text-anchor="end" textLength="13.49" lengthAdjust="spacingAndGlyphs">9,50</text><text x="538" y="198" font-size="7.6" fill="#283d6a" stroke="#283d6a" stroke-width="0.12" text-anchor="end" textLength="24.53" lengthAdjust="spacingAndGlyphs">119 026</text><text x="538" y="214" font-size="7.6" fill="#283d6a" stroke="#283d6a" stroke-width="0.12" text-anchor="end" textLength="24.53" lengthAdjust="spacingAndGlyphs">119 525</text><text x="538" y="230" font-size="7.6" fill="#283d6a" stroke="#283d6a" stroke-width="0.12" text-anchor="end" textLength="17.34" lengthAdjust="spacingAndGlyphs">1 195</text><text x="538" y="262" font-size="7.6" fill="#283d6a" stroke="#283d6a" stroke-width="0.12" text-anchor="end" textLength="13.49" lengthAdjust="spacingAndGlyphs">5,18</text><text x="538" y="278" font-size="7.6" fill="#283d6a" stroke="#283d6a" stroke-width="0.12" text-anchor="end" textLength="13.49" lengthAdjust="spacingAndGlyphs">4,27</text><text x="538" y="294" font-size="7.6" fill="#283d6a" stroke="#283d6a" stroke-width="0.12" text-anchor="end" textLength="12.97" lengthAdjust="spacingAndGlyphs">3,11</text><text x="538" y="310" font-size="7.6" fill="#283d6a" stroke="#283d6a" stroke-width="0.12" text-anchor="end" textLength="17.34" lengthAdjust="spacingAndGlyphs">21,91</text><text x="538" y="326" font-size="7.6" fill="#283d6a" stroke="#283d6a" stroke-width="0.12" text-anchor="end" textLength="17.34" lengthAdjust="spacingAndGlyphs">16,95</text><text x="538" y="342" font-size="7.6" fill="#283d6a" stroke="#283d6a" stroke-width="0.12" text-anchor="end" textLength="17.34" lengthAdjust="spacingAndGlyphs">15,52</text><text x="538" y="358" font-size="7.6" fill="#283d6a" stroke="#283d6a" stroke-width="0.12" text-anchor="end" textLength="13.49" lengthAdjust="spacingAndGlyphs">9,58</text><text x="591" y="198" font-size="7.6" fill="#283d6a" stroke="#283d6a" stroke-width="0.12" text-anchor="end" textLength="24.53" lengthAdjust="spacingAndGlyphs">119 526</text><text x="591" y="214" font-size="7.6" fill="#283d6a" stroke="#283d6a" stroke-width="0.12" text-anchor="end" textLength="25.05" lengthAdjust="spacingAndGlyphs">120 025</text><text x="591" y="230" font-size="7.6" fill="#283d6a" stroke="#283d6a" stroke-width="0.12" text-anchor="end" textLength="17.34" lengthAdjust="spacingAndGlyphs">1 200</text><text x="591" y="262" font-size="7.6" fill="#283d6a" stroke="#283d6a" stroke-width="0.12" text-anchor="end" textLength="13.49" lengthAdjust="spacingAndGlyphs">5,20</text><text x="591" y="278" font-size="7.6" fill="#283d6a" stroke="#283d6a" stroke-width="0.12" text-anchor="end" textLength="13.49" lengthAdjust="spacingAndGlyphs">4,29</text><text x="591" y="294" font-size="7.6" fill="#283d6a" stroke="#283d6a" stroke-width="0.12" text-anchor="end" textLength="13.49" lengthAdjust="spacingAndGlyphs">3,12</text><text x="591" y="310" font-size="7.6" fill="#283d6a" stroke="#283d6a" stroke-width="0.12" text-anchor="end" textLength="17.34" lengthAdjust="spacingAndGlyphs">21,93</text><text x="591" y="326" font-size="7.6" fill="#283d6a" stroke="#283d6a" stroke-width="0.12" text-anchor="end" textLength="17.34" lengthAdjust="spacingAndGlyphs">16,97</text><text x="591" y="342" font-size="7.6" fill="#283d6a" stroke="#283d6a" stroke-width="0.12" text-anchor="end" textLength="17.34" lengthAdjust="spacingAndGlyphs">15,54</text><text x="591" y="358" font-size="7.6" fill="#283d6a" stroke="#283d6a" stroke-width="0.12" text-anchor="end" textLength="13.49" lengthAdjust="spacingAndGlyphs">9,60</text><text x="802" y="198" font-size="7.6" fill="#283d6a" stroke="#283d6a" stroke-width="0.12" text-anchor="end" textLength="25.05" lengthAdjust="spacingAndGlyphs">121 526</text><text x="802" y="214" font-size="7.6" fill="#283d6a" stroke="#283d6a" stroke-width="0.12" text-anchor="end" textLength="25.05" lengthAdjust="spacingAndGlyphs">122 025</text><text x="802" y="230" font-size="7.6" fill="#283d6a" stroke="#283d6a" stroke-width="0.12" text-anchor="end" textLength="17.34" lengthAdjust="spacingAndGlyphs">1 220</text><text x="802" y="262" font-size="7.6" fill="#283d6a" stroke="#283d6a" stroke-width="0.12" text-anchor="end" textLength="13.49" lengthAdjust="spacingAndGlyphs">5,28</text><text x="802" y="278" font-size="7.6" fill="#283d6a" stroke="#283d6a" stroke-width="0.12" text-anchor="end" textLength="13.49" lengthAdjust="spacingAndGlyphs">4,35</text><text x="802" y="294" font-size="7.6" fill="#283d6a" stroke="#283d6a" stroke-width="0.12" text-anchor="end" textLength="13.49" lengthAdjust="spacingAndGlyphs">3,16</text><text x="802" y="310" font-size="7.6" fill="#283d6a" stroke="#283d6a" stroke-width="0.12" text-anchor="end" textLength="17.34" lengthAdjust="spacingAndGlyphs">22,01</text><text x="802" y="326" font-size="7.6" fill="#283d6a" stroke="#283d6a" stroke-width="0.12" text-anchor="end" textLength="17.34" lengthAdjust="spacingAndGlyphs">17,05</text><text x="802" y="342" font-size="7.6" fill="#283d6a" stroke="#283d6a" stroke-width="0.12" text-anchor="end" textLength="17.34" lengthAdjust="spacingAndGlyphs">15,62</text><text x="802" y="358" font-size="7.6" fill="#283d6a" stroke="#283d6a" stroke-width="0.12" text-anchor="end" textLength="13.49" lengthAdjust="spacingAndGlyphs">9,68</text><text x="855" y="198" font-size="7.6" fill="#283d6a" stroke="#283d6a" stroke-width="0.12" text-anchor="end" textLength="25.05" lengthAdjust="spacingAndGlyphs">122 026</text><text x="855" y="214" font-size="7.6" fill="#283d6a" stroke="#283d6a" stroke-width="0.12" text-anchor="end" textLength="25.05" lengthAdjust="spacingAndGlyphs">122 525</text><text x="855" y="230" font-size="7.6" fill="#283d6a" stroke="#283d6a" stroke-width="0.12" text-anchor="end" textLength="17.34" lengthAdjust="spacingAndGlyphs">1 225</text><text x="855" y="262" font-size="7.6" fill="#283d6a" stroke="#283d6a" stroke-width="0.12" text-anchor="end" textLength="13.49" lengthAdjust="spacingAndGlyphs">5,30</text><text x="855" y="278" font-size="7.6" fill="#283d6a" stroke="#283d6a" stroke-width="0.12" text-anchor="end" textLength="13.49" lengthAdjust="spacingAndGlyphs">4,37</text><text x="855" y="294" font-size="7.6" fill="#283d6a" stroke="#283d6a" stroke-width="0.12" text-anchor="end" textLength="13.49" lengthAdjust="spacingAndGlyphs">3,17</text><text x="855" y="310" font-size="7.6" fill="#283d6a" stroke="#283d6a" stroke-width="0.12" text-anchor="end" textLength="17.34" lengthAdjust="spacingAndGlyphs">22,03</text><text x="855" y="326" font-size="7.6" fill="#283d6a" stroke="#283d6a" stroke-width="0.12" text-anchor="end" textLength="17.34" lengthAdjust="spacingAndGlyphs">17,07</text><text x="855" y="342" font-size="7.6" fill="#283d6a" stroke="#283d6a" stroke-width="0.12" text-anchor="end" textLength="17.34" lengthAdjust="spacingAndGlyphs">15,64</text><text x="855" y="358" font-size="7.6" fill="#283d6a" stroke="#283d6a" stroke-width="0.12" text-anchor="end" textLength="13.49" lengthAdjust="spacingAndGlyphs">9,70</text></svg>
<svg class="L" width="1024" height="539" style="transform:translate3d(0.5px,0.5px,0) rotate(0.005deg)"><text x="80" y="102" font-size="7.6" fill="#283d6a" stroke="#283d6a" stroke-width="0.12" textLength="21.60" lengthAdjust="spacingAndGlyphs">Devises</text><text x="135" y="102" font-size="7.6" fill="#283d6a" stroke="#283d6a" stroke-width="0.12" textLength="25.60" lengthAdjust="spacingAndGlyphs">COFITER</text></svg>
<svg class="L" width="1024" height="539" style="transform:translate3d(0.5px,0.75px,0) rotate(0.005deg)"><text x="115" y="154" font-size="7.6" fill="#283d6a" stroke="#283d6a" stroke-width="0.12" textLength="59.50" lengthAdjust="spacingAndGlyphs">Cours de l'or (au kg)</text><text x="116" y="167" font-size="7.6" fill="#808a9f" stroke="#808a9f" stroke-width="0.12" textLength="50.50" lengthAdjust="spacingAndGlyphs">Cours indisponible</text><text x="208" y="167" font-size="7.6" fill="#283d6a" stroke="#283d6a" stroke-width="0.12" textLength="11.50" lengthAdjust="spacingAndGlyphs">480</text><text x="306" y="167" font-size="7.6" fill="#283d6a" stroke="#283d6a" stroke-width="0.12" textLength="35.00" lengthAdjust="spacingAndGlyphs">17/10/2025</text><text x="10" y="262" font-size="7.6" fill="#283d6a" stroke="#283d6a" stroke-width="0.12" textLength="16.00" lengthAdjust="spacingAndGlyphs">Pos 1</text><text x="81" y="262" font-size="7.6" fill="#283d6a" stroke="#283d6a" stroke-width="0.12" textLength="66.50" lengthAdjust="spacingAndGlyphs">150-153/218-518/18C</text><text x="10" y="278" font-size="7.6" fill="#283d6a" stroke="#283d6a" stroke-width="0.12" textLength="16.00" lengthAdjust="spacingAndGlyphs">Pos 2</text><text x="81" y="278" font-size="7.6" fill="#283d6a" stroke="#283d6a" stroke-width="0.12" textLength="66.50" lengthAdjust="spacingAndGlyphs">154-157/114-514/14C</text><text x="10" y="294" font-size="7.6" fill="#283d6a" stroke="#283d6a" stroke-width="0.12" textLength="16.00" lengthAdjust="spacingAndGlyphs">Pos 3</text><text x="81" y="294" font-size="7.6" fill="#283d6a" stroke="#283d6a" stroke-width="0.12" textLength="75.50" lengthAdjust="spacingAndGlyphs">158-160/377-376-209/9C</text><text x="10" y="310" font-size="7.6" fill="#283d6a" stroke="#283d6a" stroke-width="0.12" textLength="19.50" lengthAdjust="spacingAndGlyphs">Pos 10</text><text x="81" y="310" font-size="7.6" fill="#283d6a" stroke="#283d6a" stroke-width="0.12" textLength="29.00" lengthAdjust="spacingAndGlyphs">3168/18C</text><text x="10" y="326" font-size="7.6" fill="#283d6a" stroke="#283d6a" stroke-width="0.12" textLength="19.50" lengthAdjust="spacingAndGlyphs">Pos 11</text><text x="81" y="326" font-size="7.6" fill="#283d6a" stroke="#283d6a" stroke-width="0.12" textLength="52.50" lengthAdjust="spacingAndGlyphs">548-490/150/18C</text><text x="10" y="342" font-size="7.6" fill="#283d6a" stroke="#283d6a" stroke-width="0.12" textLength="19.50" lengthAdjust="spacingAndGlyphs">Pos 13</text><text x="81" y="342" font-size="7.6" fill="#283d6a" stroke="#283d6a" stroke-width="0.12" textLength="73.50" lengthAdjust="spacingAndGlyphs">562-1180-3162/125/18C</text><text x="10" y="358" font-size="7.6" fill="#283d6a" stroke="#283d6a" stroke-width="0.12" textLength="19.50" lengthAdjust="spacingAndGlyphs">Pos 21</text><text x="81" y="358" font-size="7.6" fill="#283d6a" stroke="#283d6a" stroke-width="0.12" textLength="39.50" lengthAdjust="spacingAndGlyphs">560/109/18C</text><text x="485" y="198" font-size="7.6" fill="#283d6a" stroke="#283d6a" stroke-width="0.12" text-anchor="end" textLength="24.53" lengthAdjust="spacingAndGlyphs">118 526</text><text x="485" y="214" font-size="7.6" fill="#283d6a" stroke="#283d6a" stroke-width="0.12" text-anchor="end" textLength="24.53" lengthAdjust="spacingAndGlyphs">119 025</text><text x="485" y="230" font-size="7.6" fill="#283d6a" stroke="#283d6a" stroke-width="0.12" text-anchor="end" textLength="17.34" lengthAdjust="spacingAndGlyphs">1 190</text><text x="485" y="262" font-size="7.6" fill="#283d6a" stroke="#283d6a" stroke-width="0.12" text-anchor="end" textLength="13.49" lengthAdjust="spacingAndGlyphs">5,16</text><text x="485" y="278" font-size="7.6" fill="#283d6a" stroke="#283d6a" stroke-width="0.12" text-anchor="end" textLength="13.49" lengthAdjust="spacingAndGlyphs">4,26</text><text x="485" y="294" font-size="7.6" fill="#283d6a" stroke="#283d6a" stroke-width="0.12" text-anchor="end" textLength="13.49" lengthAdjust="spacingAndGlyphs">3,10</text><text x="485" y="310" font-size="7.6" fill="#283d6a" stroke="#283d6a" stroke-width="0.12" text-anchor="end" textLength="17.34" lengthAdjust="spacingAndGlyphs">21,89</text><text x="485" y="326" font-size="7.6" fill="#283d6a" stroke="#283d6a" stroke-width="0.12" text-anchor="end" textLength="17.34" lengthAdjust="spacingAndGlyphs">16,93</text><text x="485" y="342" font-size="7.6" fill="#283d6a" stroke="#283d6a" stroke-width="0.12" text-anchor="end" textLength="17.34" lengthAdjust="spacingAndGlyphs">15,50</text><text x="485" y="358" font-size="7.6" fill="#283d6a" stroke="#283d6a" stroke-width="0.12" text-anchor="end" textLength="13.49" lengthAdjust="spacingAndGlyphs">9,56</text><text x="749" y="198" font-size="7.6" fill="#283d6a" stroke="#283d6a" stroke-width="0.12" text-anchor="end" textLength="25.05" lengthAdjust="spacingAndGlyphs">121 026</text><text x="749" y="214" font-size="7.6" fill="#283d6a" stroke="#283d6a" stroke-width="0.12" text-anchor="end" textLength="25.05" lengthAdjust="spacingAndGlyphs">121 525</text><text x="749" y="230" font-size="7.6" fill="#283d6a" stroke="#283d6a" stroke-width="0.12" text-anchor="end" textLength="17.34" lengthAdjust="spacingAndGlyphs">1 215</text><text x="749" y="262" font-size="7.6" fill="#283d6a" stroke="#283d6a" stroke-width="0.12" text-anchor="end" textLength="13.49" lengthAdjust="spacingAndGlyphs">5,26</text><text x="749" y="278" font-size="7.6" fill="#283d6a" stroke="#283d6a" stroke-width="0.12" text-anchor="end" textLength="13.49" lengthAdjust="spacingAndGlyphs">4,34</text><text x="749" y="294" font-size="7.6" fill="#283d6a" stroke="#283d6a" stroke-width="0.12" text-anchor="end" textLength="13.49" lengthAdjust="spacingAndGlyphs">3,15</text><text x="749" y="310" font-size="7.6" fill="#283d6a" stroke="#283d6a" stroke-width="0.12" text-anchor="end" textLength="17.34" lengthAdjust="spacingAndGlyphs">21,99</text><text x="749" y="326" font-size="7.6" fill="#283d6a" stroke="#283d6a" stroke-width="0.12" text-anchor="end" textLength="17.34" lengthAdjust="spacingAndGlyphs">17,03</text><text x="749" y="342" font-size="7.6" fill="#283d6a" stroke="#283d6a" stroke-width="0.12" text-anchor="end" textLength="17.34" lengthAdjust="spacingAndGlyphs">15,60</text><text x="749" y="358" font-size="7.6" fill="#283d6a" stroke="#283d6a" stroke-width="0.12" text-anchor="end" textLength="13.49" lengthAdjust="spacingAndGlyphs">9,66</text></svg>
<svg class="L" width="1024" height="539" style="transform:translate3d(0.75px,0.0px,0) rotate(0.005deg)"><text x="939" y="54" font-size="7.4" fill="#fff" stroke="#fff" stroke-width="0.12" font-weight="bold" textLength="20.70" lengthAdjust="spacingAndGlyphs">Vente</text><text x="939" y="76" font-size="7.4" fill="#fff" stroke="#fff" stroke-width="0.12" font-weight="bold" textLength="20.70" lengthAdjust="spacingAndGlyphs">Achat</text><text x="939" y="98" font-size="7.4" fill="#fff" stroke="#fff" stroke-width="0.12" font-weight="bold" textLength="22.50" lengthAdjust="spacingAndGlyphs">Edition</text></svg>
<svg class="L" width="1024" height="539" style="transform:translate3d(0.75px,0.5px,0) rotate(0.005deg)"><text x="23" y="102" font-size="7.6" fill="#283d6a" stroke="#283d6a" stroke-width="0.12" textLength="21.40" lengthAdjust="spacingAndGlyphs">Métaux</text><text x="10" y="206" font-size="7.4" fill="#283d6a" stroke="#283d6a" stroke-width="0.12" font-weight="bold" textLength="69.25" lengthAdjust="spacingAndGlyphs">Plage de stabilisation</text><text x="10" y="230" font-size="7.4" fill="#283d6a" stroke="#283d6a" stroke-width="0.12" font-weight="bold" textLength="53.00" lengthAdjust="spacingAndGlyphs">Plage stabilisées</text><text x="10" y="246" font-size="7.4" fill="#283d6a" stroke="#283d6a" stroke-width="0.12" font-weight="bold" textLength="24.50" lengthAdjust="spacingAndGlyphs">Alliages</text></svg>
<svg class="L" width="1024" height="539" style="transform:translate3d(0.75px,0.75px,0) rotate(0.005deg)"><text x="939" y="119" font-size="7.4" fill="#fff" stroke="#fff" stroke-width="0.12" font-weight="bold" textLength="22.90" lengthAdjust="spacingAndGlyphs">Atelier</text><text x="939" y="141" font-size="7.4" fill="#fff" stroke="#fff" stroke-width="0.12" font-weight="bold" textLength="39.60" lengthAdjust="spacingAndGlyphs">Supervision</text><text x="939" y="163" font-size="7.4" fill="#fff" stroke="#fff" stroke-width="0.12" font-weight="bold" textLength="25.70" lengthAdjust="spacingAndGlyphs">Douane</text><text x="939" y="185" font-size="7.4" fill="#fff" stroke="#fff" stroke-width="0.12" font-weight="bold" textLength="19.20" lengthAdjust="spacingAndGlyphs">Outils</text><text x="23" y="154" font-size="7.6" fill="#283d6a" stroke="#283d6a" stroke-width="0.12" textLength="46.25" lengthAdjust="spacingAndGlyphs">Date de la table</text><text x="391" y="154" font-size="7.6" fill="#283d6a" stroke="#283d6a" stroke-width="0.12" textLength="46.25" lengthAdjust="spacingAndGlyphs">Valable jusqu'au</text><text x="432" y="198" font-size="7.6" fill="#283d6a" stroke="#283d6a" stroke-width="0.12" text-anchor="end" textLength="24.53" lengthAdjust="spacingAndGlyphs">118 026</text><text x="432" y="214" font-size="7.6" fill="#283d6a" stroke="#283d6a" stroke-width="0.12" text-anchor="end" textLength="24.53" lengthAdjust="spacingAndGlyphs">118 525</text><text x="432" y="230" font-size="7.6" fill="#283d6a" stroke="#283d6a" stroke-width="0.12" text-anchor="end" textLength="17.34" lengthAdjust="spacingAndGlyphs">1 185</text><text x="432" y="262" font-size="7.6" fill="#283d6a" stroke="#283d6a" stroke-width="0.12" text-anchor="end" textLength="13.49" lengthAdjust="spacingAndGlyphs">5,14</text><text x="432" y="278" font-size="7.6" fill="#283d6a" stroke="#283d6a" stroke-width="0.12" text-anchor="end" textLength="13.49" lengthAdjust="spacingAndGlyphs">4,24</text><text x="432" y="294" font-size="7.6" fill="#283d6a" stroke="#283d6a" stroke-width="0.12" text-anchor="end" textLength="13.49" lengthAdjust="spacingAndGlyphs">3,09</text><text x="432" y="310" font-size="7.6" fill="#283d6a" stroke="#283d6a" stroke-width="0.12" text-anchor="end" textLength="17.34" lengthAdjust="spacingAndGlyphs">21,87</text><text x="432" y="326" font-size="7.6" fill="#283d6a" stroke="#283d6a" stroke-width="0.12" text-anchor="end" textLength="17.34" lengthAdjust="spacingAndGlyphs">16,91</text><text x="432" y="342" font-size="7.6" fill="#283d6a" stroke="#283d6a" stroke-width="0.12" text-anchor="end" textLength="17.34" lengthAdjust="spacingAndGlyphs">15,48</text><text x="432" y="358" font-size="7.6" fill="#283d6a" stroke="#283d6a" stroke-width="0.12" text-anchor="end" textLength="13.49" lengthAdjust="spacingAndGlyphs">9,54</text><text x="696" y="198" font-size="7.6" fill="#283d6a" stroke="#283d6a" stroke-width="0.12" text-anchor="end" textLength="25.05" lengthAdjust="spacingAndGlyphs">120 526</text><text x="696" y="214" font-size="7.6" fill="#283d6a" stroke="#283d6a" stroke-width="0.12" text-anchor="end" textLength="25.05" lengthAdjust="spacingAndGlyphs">121 025</text><text x="696" y="230" font-size="7.6" fill="#283d6a" stroke="#283d6a" stroke-width="0.12" text-anchor="end" textLength="17.34" lengthAdjust="spacingAndGlyphs">1 210</text><text x="696" y="262" font-size="7.6" fill="#283d6a" stroke="#283d6a" stroke-width="0.12" text-anchor="end" textLength="13.49" lengthAdjust="spacingAndGlyphs">5,24</text><text x="696" y="278" font-size="7.6" fill="#283d6a" stroke="#283d6a" stroke-width="0.12" text-anchor="end" textLength="13.49" lengthAdjust="spacingAndGlyphs">4,32</text><text x="696" y="294" font-size="7.6" fill="#283d6a" stroke="#283d6a" stroke-width="0.12" text-anchor="end" textLength="13.49" lengthAdjust="spacingAndGlyphs">3,14</text><text x="696" y="310" font-size="7.6" fill="#283d6a" stroke="#283d6a" stroke-width="0.12" text-anchor="end" textLength="17.34" lengthAdjust="spacingAndGlyphs">21,97</text><text x="696" y="326" font-size="7.6" fill="#283d6a" stroke="#283d6a" stroke-width="0.12" text-anchor="end" textLength="17.34" lengthAdjust="spacingAndGlyphs">17,01</text><text x="696" y="342" font-size="7.6" fill="#283d6a" stroke="#283d6a" stroke-width="0.12" text-anchor="end" textLength="17.34" lengthAdjust="spacingAndGlyphs">15,58</text><text x="696" y="358" font-size="7.6" fill="#283d6a" stroke="#283d6a" stroke-width="0.12" text-anchor="end" textLength="13.49" lengthAdjust="spacingAndGlyphs">9,64</text></svg>
</body></html>
